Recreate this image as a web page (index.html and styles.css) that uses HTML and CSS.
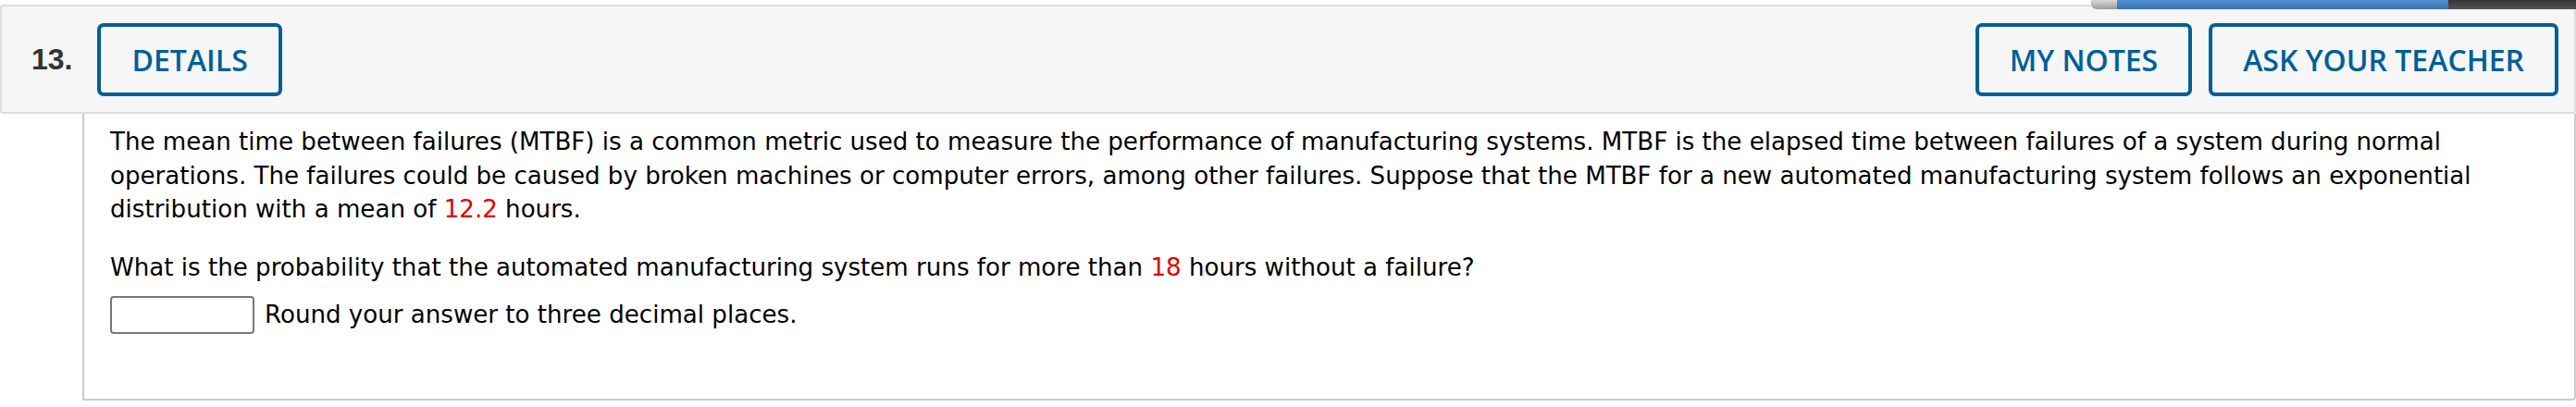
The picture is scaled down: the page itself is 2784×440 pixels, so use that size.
FILE: index.html
```html
<!DOCTYPE html>
<html lang="en">
<head>
<meta charset="utf-8">
<title>Question 13</title>
<link rel="stylesheet" href="styles.css">
</head>
<body>
<div class="scrollbar">
  <span class="knob"></span>
  <span class="track-blue"></span>
  <span class="track-dark"></span>
</div>
<div class="question">
  <div class="q-header">
    <span class="q-num">13.</span>
    <button class="q-btn">DETAILS</button>
    <span class="spacer"></span>
    <button class="q-btn">MY NOTES</button>
    <button class="q-btn">ASK YOUR TEACHER</button>
  </div>
  <div class="q-body">
    <p class="q-text">The mean time between failures (MTBF) is a common metric used to measure the performance of manufacturing systems. MTBF is the elapsed time between failures of a system during normal operations. The failures could be caused by broken machines or computer errors, among other failures. Suppose that the MTBF for a new automated manufacturing system follows an exponential distribution with a mean of <span class="num">12.2</span> hours.</p>
    <p class="q-text">What is the probability that the automated manufacturing system runs for more than <span class="num">18</span> hours without a failure?</p>
    <div class="answer-row">
      <input class="answer" type="text">
      <span class="q-text">Round your answer to three decimal places.</span>
    </div>
  </div>
</div>
</body>
</html>
```
FILE: styles.css
```css
html, body {
  margin: 0;
  padding: 0;
  background: #ffffff;
}
body {
  position: relative;
  width: 2784px;
}
.scrollbar {
  position: absolute;
  top: 0;
  left: 2260px;
  right: 0;
  height: 10px;
  display: flex;
  z-index: 2;
}
.knob {
  width: 28px;
  background: linear-gradient(#d8d8d8, #9a9a9a);
  border-radius: 0 0 0 6px;
}
.track-blue {
  flex: 0 0 358px;
  background: linear-gradient(#4c92d4, #3d72a8);
}
.track-dark {
  flex: 1;
  background: linear-gradient(#333333, #555555);
}
.question {
  padding-top: 5px;
}
.q-header {
  display: flex;
  align-items: center;
  gap: 18px;
  background: #f6f6f6;
  border: 2px solid #dddddd;
  border-radius: 3px;
  padding: 18px 17px 17px 32px;
  height: 79px;
}
.q-num {
  font-family: "Liberation Sans", Arial, sans-serif;
  font-weight: bold;
  font-size: 32px;
  color: #333333;
  margin-right: 9px;
}
.spacer {
  flex: 1;
}
.q-btn {
  font-family: "Open Sans", "Noto Sans", sans-serif;
  font-weight: 600;
  font-size: 32px;
  color: #005f97;
  background: transparent;
  border: 4px solid #005f97;
  border-radius: 7px;
  height: 79px;
  padding: 0 33px;
  line-height: 1;
}
.q-body {
  margin-left: 89px;
  border-left: 2px solid #cccccc;
  border-right: 2px solid #cccccc;
  border-bottom: 2px solid #cccccc;
  border-radius: 0 0 4px 0;
  padding: 12px 30px 0 28px;
  height: 296px;
}
.q-text {
  font-family: "DejaVu Sans", Verdana, sans-serif;
  font-size: 26.1px;
  line-height: 36.5px;
  color: #000000;
  margin: 0 0 26px 0;
}
.num {
  color: #e00000;
}
.answer-row {
  display: flex;
  align-items: center;
  gap: 11px;
  margin-top: -13px;
}
.answer-row .q-text {
  margin: 0;
}
.answer {
  width: 156px;
  height: 41px;
  box-sizing: border-box;
  border: 2px solid #777777;
  border-radius: 4px;
  background: #ffffff;
  margin: 0;
}
```
